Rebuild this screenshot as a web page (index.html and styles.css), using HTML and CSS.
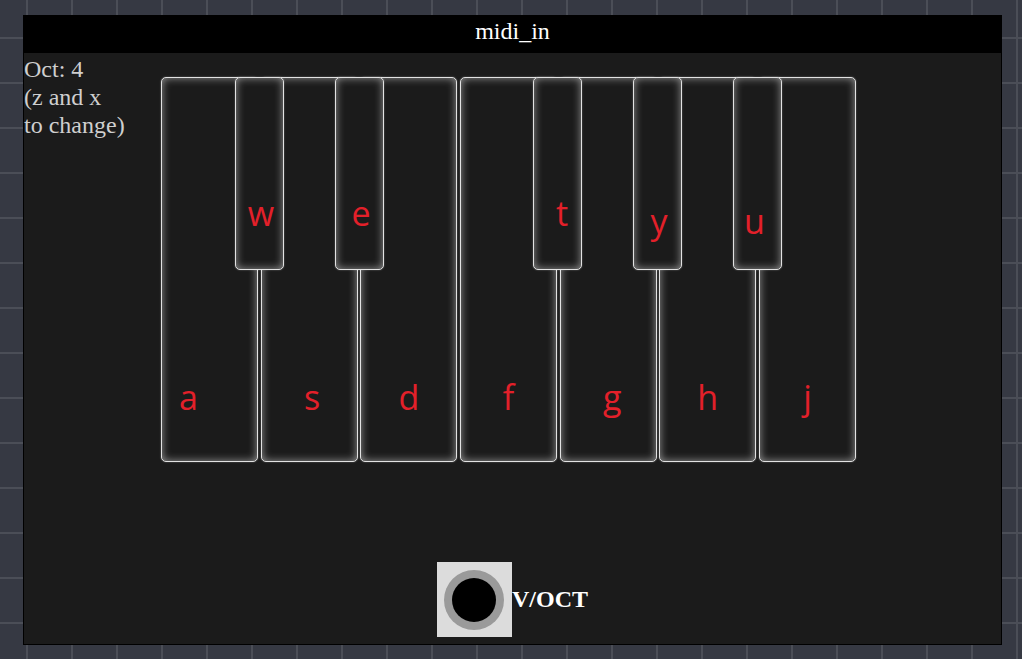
FILE: index.html
```html
<!DOCTYPE html>
<html>
<head>
<meta charset="utf-8">
<link rel="stylesheet" href="styles.css">
</head>
<body>
<div class="panel">
  <div class="title">midi_in</div>
  <div class="content">
    <div class="top-row">
      <div class="oct">Oct: 4<br>(z and x<br>to change)</div>
      <div class="keyboard">
        <div class="white-keys">
          <div class="wkey wkey-a"><span>a</span></div>
          <div class="wkey wkey-s"><span>s</span></div>
          <div class="wkey"><span>d</span></div>
          <div class="wkey"><span>f</span></div>
          <div class="wkey wkey-g"><span>g</span></div>
          <div class="wkey"><span>h</span></div>
          <div class="wkey"><span>j</span></div>
        </div>
        <div class="bkey bkey-1"><span>w</span></div>
        <div class="bkey bkey-2"><span>e</span></div>
        <div class="bkey bkey-4"><span>t</span></div>
        <div class="bkey bkey-5 low"><span>y</span></div>
        <div class="bkey bkey-6 low"><span>u</span></div>
      </div>
    </div>
    <div class="io-row">
      <div class="jack"><div class="jack-ring"><div class="jack-hole"></div></div></div>
      <div class="io-label">V/OCT</div>
    </div>
  </div>
</div>
</body>
</html>
```

FILE: styles.css
```css
html, body {
  margin: 0;
  padding: 0;
}
body {
  width: 1022px;
  height: 659px;
  overflow: hidden;
  background-color: #363943;
  background-image:
    linear-gradient(to right, #4b4e57 2px, transparent 2px),
    linear-gradient(to bottom, #4b4e57 2px, transparent 2px);
  background-size: 45px 45px;
  background-position: 26px 37px;
  font-family: "Liberation Serif", "Times New Roman", serif;
}
.panel {
  margin: 15px 0 0 23px;
  width: 977px;
  height: 628px;
  border: 1px solid #000;
  background: #1b1b1b;
  display: flex;
  flex-direction: column;
}
.title {
  height: 37px;
  line-height: 31px;
  background: #000;
  color: #fff;
  font-size: 24px;
  text-align: center;
}
.content {
  flex: 1;
  display: flex;
  flex-direction: column;
  padding-bottom: 7px;
}
.top-row {
  display: flex;
  align-items: flex-start;
}
.oct {
  width: 137px;
  color: #cfcfcf;
  font-size: 24px;
  line-height: 28px;
  padding-top: 2px;
}
.keyboard {
  position: relative;
  margin-top: 24px;
  width: 695px;
  height: 385px;
}
.white-keys {
  display: flex;
  gap: 2.67px;
  height: 100%;
}
.wkey, .bkey {
  box-sizing: border-box;
  border: 1px solid #e2e2e2;
  border-radius: 5px;
  background: #1b1b1b;
  box-shadow: inset 0 0 8px rgba(255, 255, 255, 0.55), 0 0 2px rgba(255, 255, 255, 0.35);
  color: #e3202a;
  font-family: "Open Sans", "Noto Sans", sans-serif;
  font-size: 34px;
  line-height: 40px;
}
.wkey {
  width: 97px;
  height: 100%;
  display: flex;
  flex-direction: column;
  justify-content: flex-end;
  align-items: center;
  padding-bottom: 44px;
}
.wkey-a {
  padding-right: 42px;
}
.wkey-s {
  padding-left: 6px;
}
.wkey-g {
  padding-left: 8px;
}
.bkey {
  position: absolute;
  top: 0;
  width: 49px;
  height: 193px;
  display: flex;
  justify-content: center;
  padding-top: 115px;
  padding-left: 3px;
}
.bkey.low {
  padding-top: 123px;
}
.bkey-1 { left: 74px; }
.bkey-2 { left: 174px; }
.bkey-4 { left: 372px; padding-left: 9px; }
.bkey-5 { left: 472px; }
.bkey-6 { left: 572px; padding-left: 0; padding-right: 6px; }
.io-row {
  margin-top: auto;
  display: flex;
  justify-content: center;
  align-items: center;
}
.jack {
  width: 75px;
  height: 75px;
  background: #dcdcdc;
  display: flex;
  align-items: center;
  justify-content: center;
}
.jack-ring {
  width: 60px;
  height: 60px;
  border-radius: 50%;
  background: #9a9a9a;
  display: flex;
  align-items: center;
  justify-content: center;
}
.jack-hole {
  width: 44px;
  height: 44px;
  border-radius: 50%;
  background: #000;
}
.io-label {
  color: #fff;
  font-weight: bold;
  font-size: 24px;
}
```
